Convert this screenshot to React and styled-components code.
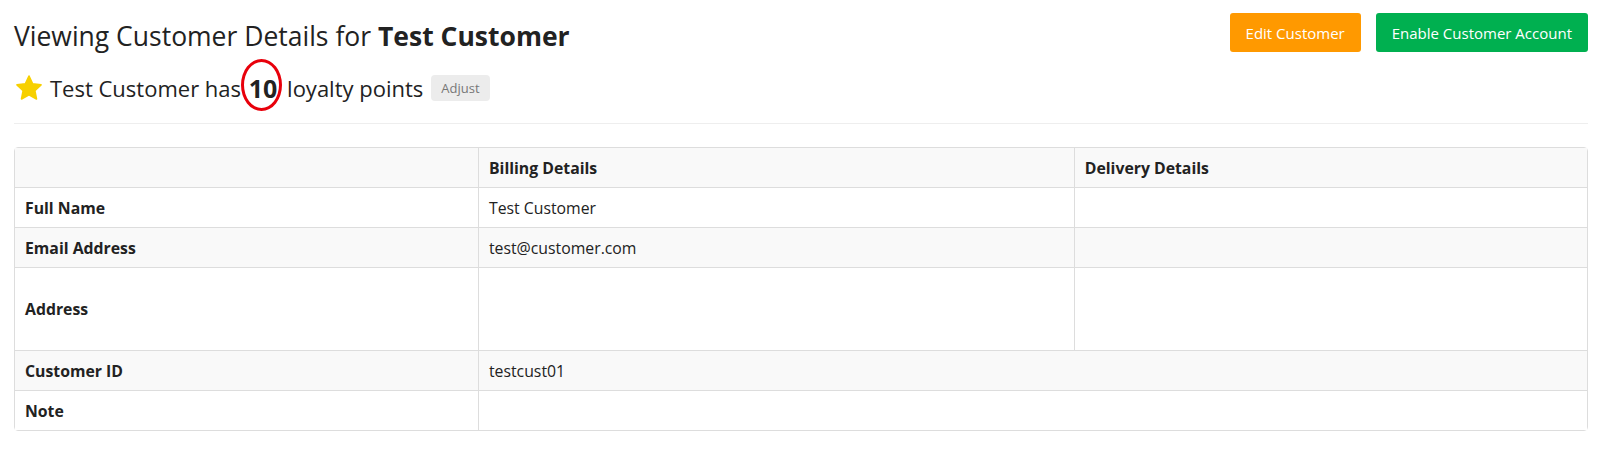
import React from "react";
import styled, { createGlobalStyle } from "styled-components";

const GlobalStyle = createGlobalStyle`
  body {
    margin: 0;
    background: #fff;
    font-family: "Open Sans", "Liberation Sans", sans-serif;
    color: #333;
  }
`;

const Page = styled.div`
  padding: 13px 12px 0 14px;
`;

const Header = styled.div`
  display: flex;
  justify-content: space-between;
  align-items: flex-start;
  padding-bottom: 20px;
  border-bottom: 1px solid #eee;
`;

const Title = styled.h1`
  margin: 5px 0 0 0;
  font-size: 26.5px;
  font-weight: 400;
  line-height: 36px;
  color: #222;

  strong {
    font-weight: 700;
  }
`;

const Loyalty = styled.div`
  display: flex;
  align-items: center;
  margin-top: 19px;
  font-size: 22px;
  color: #222;
  line-height: 30px;
  white-space: pre;
`;

const Star = styled.svg`
  width: 28px;
  height: 28px;
  margin: 0 7px 0 1px;
`;

const Points = styled.span`
  position: relative;
  display: inline-block;
  font-weight: 700;
  font-size: 25px;
  line-height: 30px;
  margin: 0 4px 0 2px;
`;

const Circle = styled.span`
  position: absolute;
  box-sizing: border-box;
  left: -8px;
  top: -14px;
  width: 41px;
  height: 52px;
  border: 3.5px solid #e8000b;
  border-radius: 50%;
`;

const Badge = styled.span`
  display: inline-block;
  margin-left: 8px;
  padding: 0 10px;
  height: 26px;
  line-height: 26px;
  font-size: 13px;
  color: #777;
  background: #ececec;
  border-radius: 4px;
`;

const Actions = styled.div`
  display: flex;
  gap: 15px;
`;

const Button = styled.button`
  height: 39px;
  padding: 0 16px;
  border: none;
  border-radius: 3px;
  font-family: "Open Sans", "Liberation Sans", sans-serif;
  font-size: 15px;
  color: #fff;
  background: ${p => p.color};
`;

const Table = styled.table`
  width: 100%;
  margin-top: 23px;
  border-collapse: separate;
  border-spacing: 0;
  border: 1px solid #ddd;
  border-radius: 4px;
  font-size: 15.8px;
  color: #222;

  td, th {
    height: 39px;
    padding: 0 10px;
    text-align: left;
    border-top: 1px solid #ddd;
    border-left: 1px solid #ddd;
    font-weight: 400;
  }

  tr:first-child td, tr:first-child th { border-top: none; }
  td:first-child, th:first-child { border-left: none; font-weight: 700; }
  th { font-weight: 700; }
`;

const Row = styled.tr`
  background: ${p => (p.$striped ? "#f9f9f9" : "#fff")};
`;

const TallCell = styled.td`
  && { height: 82px; }
`;

const StarIcon = () => (
  <Star viewBox="0 0 24 24">
    <path
      d="M12 1.8l3.1 6.6 7.2.9-5.3 5 1.4 7.1L12 17.9l-6.4 3.5 1.4-7.1-5.3-5 7.2-.9z"
      fill="#f7d000"
      stroke="#f7d000"
      strokeWidth="1.4"
      strokeLinejoin="round"
    />
  </Star>
);

export default function App() {
  return (
    <Page>
      <GlobalStyle />
      <Header>
        <div>
          <Title>
            Viewing Customer Details for <strong>Test Customer</strong>
          </Title>
          <Loyalty>
            <StarIcon />
            {"Test Customer has "}
            <Points>
              10
              <Circle />
            </Points>
            {" loyalty points"}
            <Badge>Adjust</Badge>
          </Loyalty>
        </div>
        <Actions>
          <Button color="#ff9900">Edit Customer</Button>
          <Button color="#00b050">Enable Customer Account</Button>
        </Actions>
      </Header>

      <Table>
        <colgroup>
          <col style={{ width: "29.45%" }} />
          <col style={{ width: "37.9%" }} />
          <col />
        </colgroup>
        <tbody>
          <Row $striped>
            <th></th>
            <th>Billing Details</th>
            <th>Delivery Details</th>
          </Row>
          <Row>
            <td>Full Name</td>
            <td>Test Customer</td>
            <td></td>
          </Row>
          <Row $striped>
            <td>Email Address</td>
            <td>test@customer.com</td>
            <td></td>
          </Row>
          <Row>
            <TallCell>Address</TallCell>
            <td></td>
            <td></td>
          </Row>
          <Row $striped>
            <td>Customer ID</td>
            <td colSpan={2}>testcust01</td>
          </Row>
          <Row>
            <td>Note</td>
            <td colSpan={2}></td>
          </Row>
        </tbody>
      </Table>
    </Page>
  );
}
